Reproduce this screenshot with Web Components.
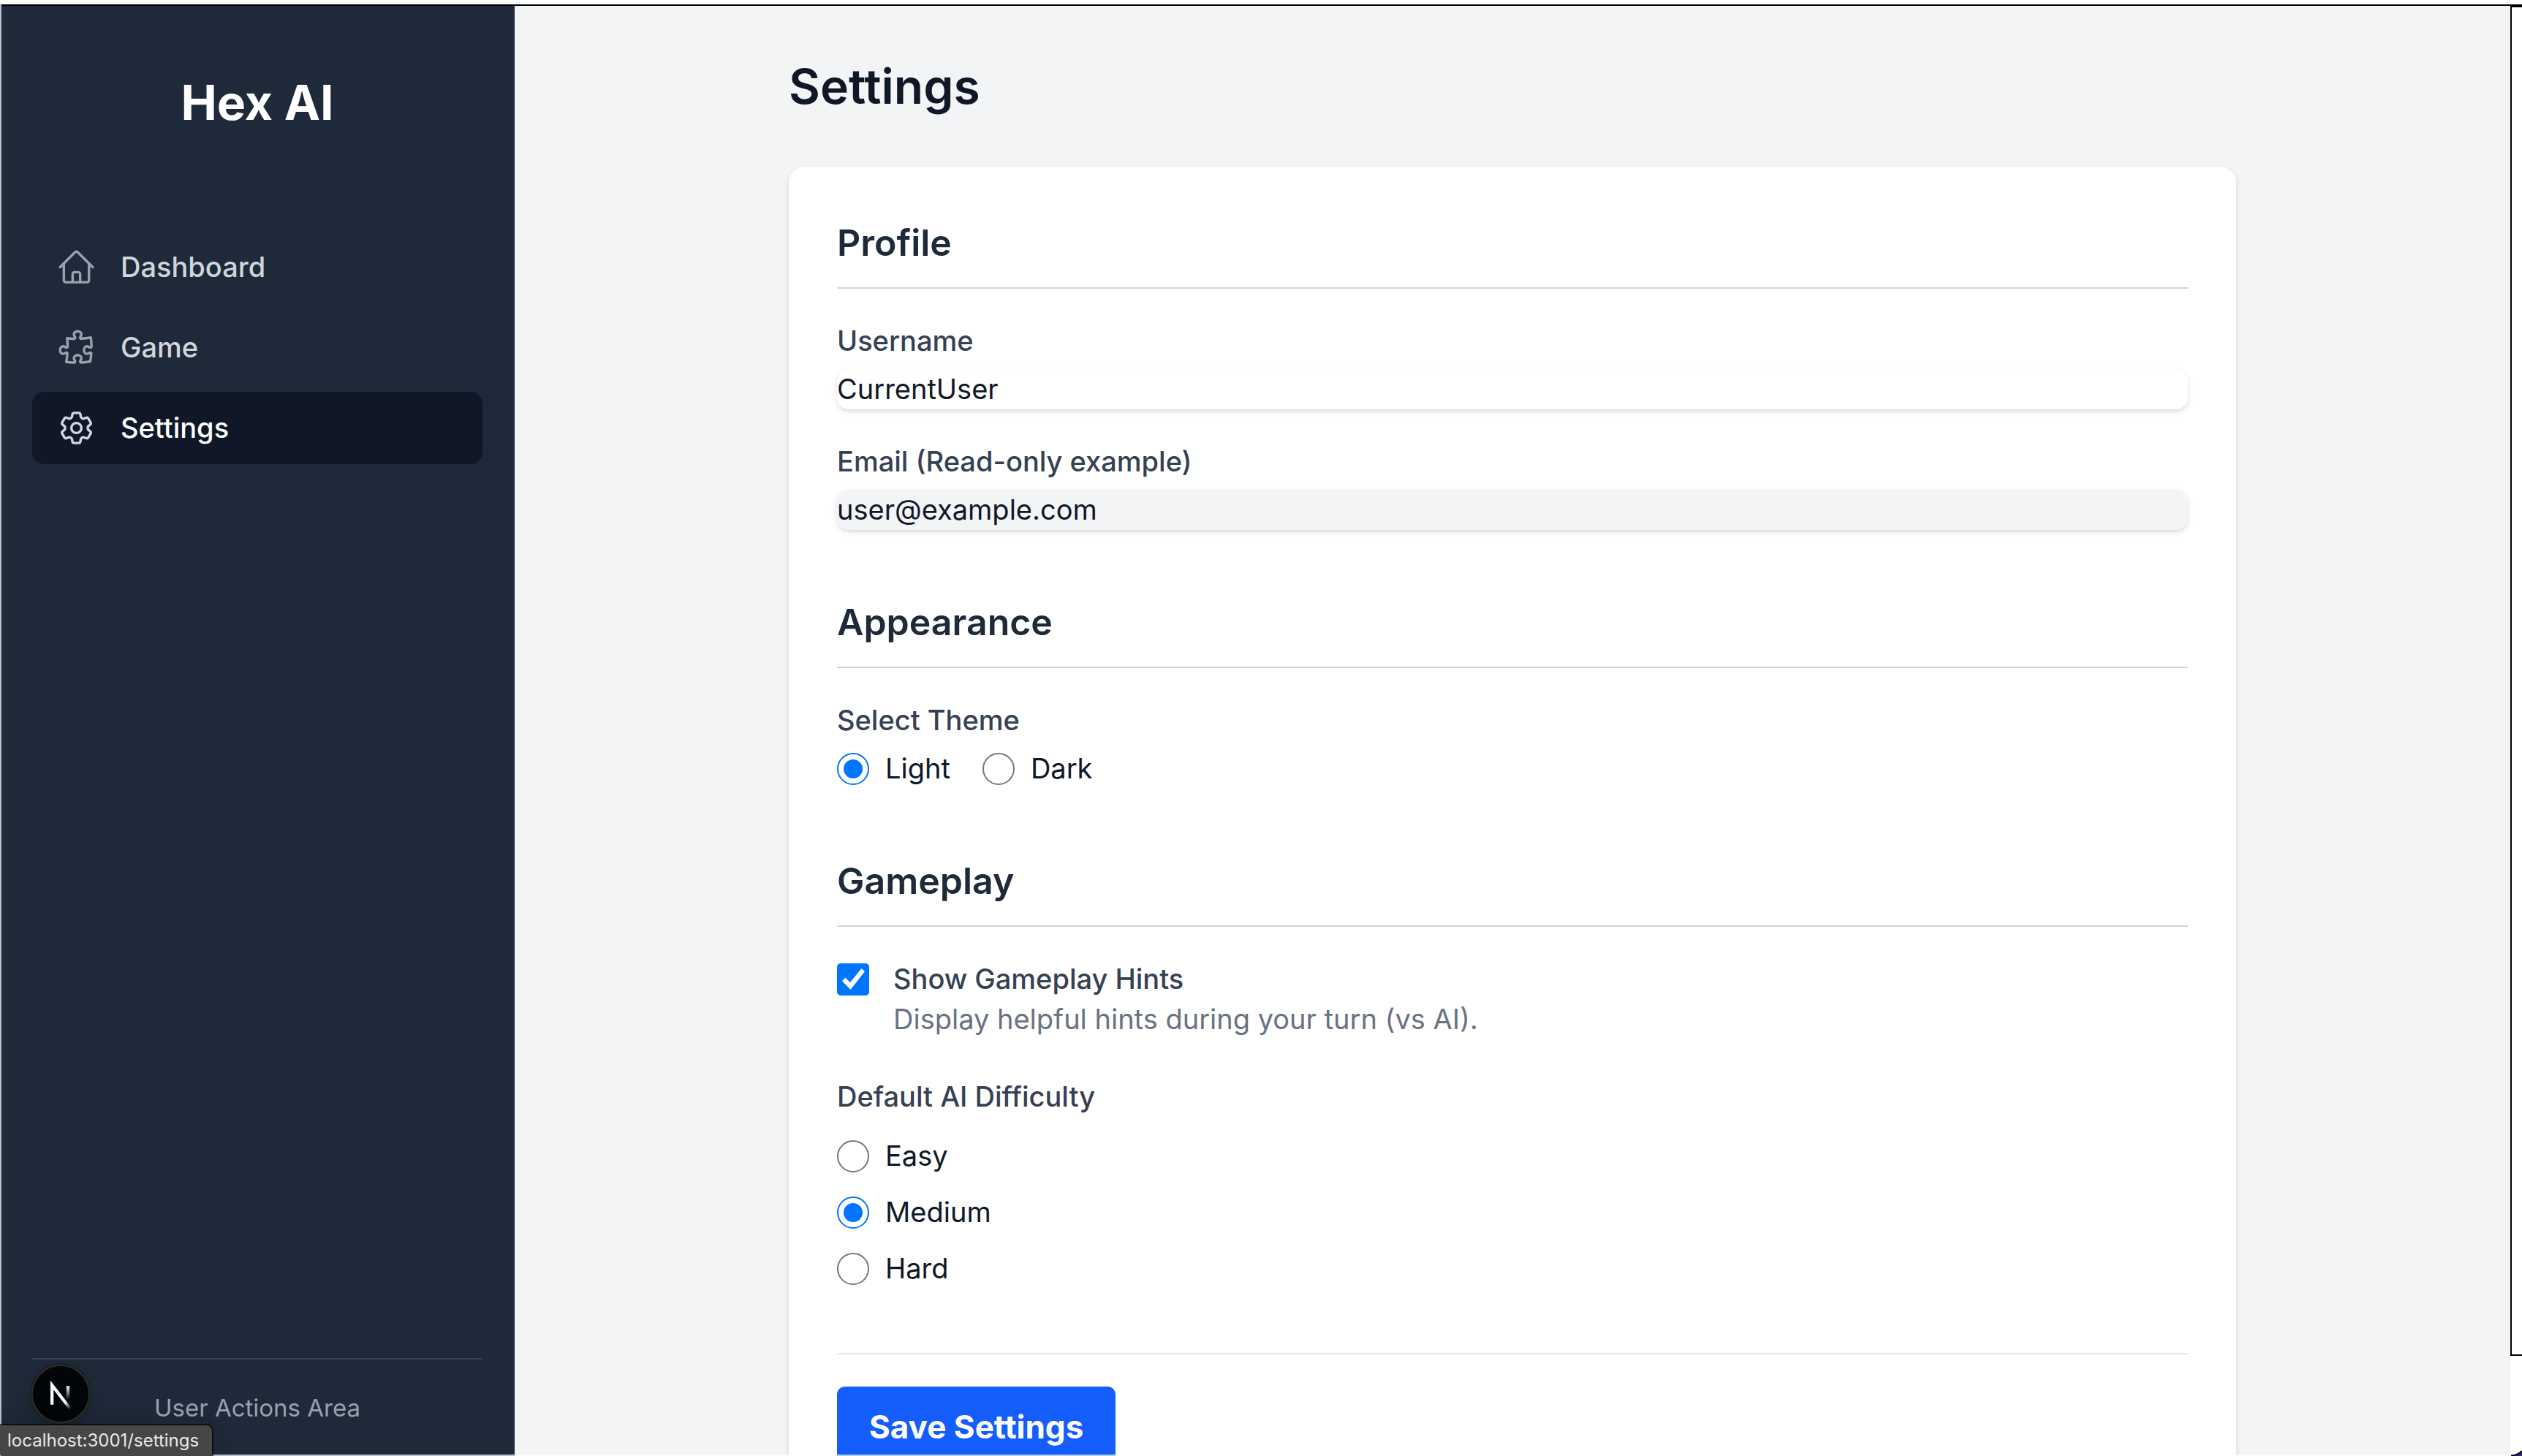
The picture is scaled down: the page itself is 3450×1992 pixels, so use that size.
<!DOCTYPE html>
<html lang="en">
<head>
<meta charset="utf-8">
<title>Hex AI - Settings</title>
<style>
  html, body { margin: 0; height: 100%; }
  body {
    font-family: Inter, "Liberation Sans", sans-serif;
    font-size: 38px; line-height: 55px; color: #101828; background: #fff;
    --gray-100: #f3f4f6; --gray-200: #e5e7eb; --gray-300: #d1d5dc; --gray-400: #99a1af;
    --gray-500: #6a7282; --gray-700: #364153; --gray-800: #1e2939; --gray-900: #101828;
    --accent: #0075ff;
  }
</style>
</head>
<body>
<app-window>
  <side-nav slot="nav" heading="Hex AI">
    <nav-item href="#dashboard" icon="home">Dashboard</nav-item>
    <nav-item href="#game" icon="puzzle">Game</nav-item>
    <nav-item href="#settings" icon="cog" active>Settings</nav-item>
    <span slot="footer">User Actions Area</span>
  </side-nav>
  <settings-page heading="Settings">
    <settings-section heading="Profile">
      <text-field label="Username" value="CurrentUser"></text-field>
      <text-field label="Email (Read-only example)" type="email" value="user@example.com" readonly></text-field>
    </settings-section>
    <settings-section heading="Appearance">
      <radio-group label="Select Theme" name="theme" options="Light,Dark" value="Light" inline></radio-group>
    </settings-section>
    <settings-section heading="Gameplay" spaced>
      <check-field label="Show Gameplay Hints" checked>Display helpful hints during your turn (vs AI).</check-field>
      <radio-group label="Default AI Difficulty" name="difficulty" options="Easy,Medium,Hard" value="Medium"></radio-group>
    </settings-section>
    <save-button slot="actions">Save Settings</save-button>
  </settings-page>
  <dev-badge slot="overlay"></dev-badge>
  <status-bubble slot="overlay">localhost:3001/settings</status-bubble>
</app-window>

<script>
const ICONS = {
  home: '<path d="M2.25 12l8.954-8.955c.44-.439 1.152-.439 1.591 0L21.75 12M4.5 9.75v10.125c0 .621.504 1.125 1.125 1.125H9.75v-4.875c0-.621.504-1.125 1.125-1.125h2.25c.621 0 1.125.504 1.125 1.125V21h4.125c.621 0 1.125-.504 1.125-1.125V9.75M8.25 21h8.25"/>',
  puzzle: '<path d="M14.25 6.087c0-.355.186-.676.401-.959.221-.29.349-.634.349-1.003 0-1.036-1.007-1.875-2.25-1.875s-2.25.84-2.25 1.875c0 .369.128.713.349 1.003.215.283.401.604.401.959v0a.64.64 0 01-.657.643 48.39 48.39 0 01-4.163-.3c.186 1.613.293 3.25.315 4.907a.656.656 0 01-.658.663v0c-.355 0-.676-.186-.959-.401a1.647 1.647 0 00-1.003-.349c-1.036 0-1.875 1.007-1.875 2.25s.84 2.25 1.875 2.25c.369 0 .713-.128 1.003-.349.283-.215.604-.401.959-.401v0c.31 0 .555.26.532.57a48.039 48.039 0 01-.642 5.056c1.518.19 3.058.309 4.616.354a.64.64 0 00.657-.643v0c0-.355-.186-.676-.401-.959a1.647 1.647 0 01-.349-1.003c0-1.035 1.008-1.875 2.25-1.875 1.243 0 2.25.84 2.25 1.875 0 .369-.128.713-.349 1.003-.215.283-.4.604-.4.959v0c0 .333.277.599.61.58a48.1 48.1 0 005.427-.63 48.05 48.05 0 00.582-4.717.532.532 0 00-.533-.57v0c-.355 0-.676.186-.959.401-.29.221-.634.349-1.003.349-1.035 0-1.875-1.007-1.875-2.25s.84-2.25 1.875-2.25c.37 0 .713.128 1.003.349.283.215.604.401.96.401v0a.656.656 0 00.658-.663 48.422 48.422 0 00-.37-5.36c-1.886.342-3.81.574-5.766.689a.578.578 0 01-.61-.58v0z"/>',
  cog: '<path d="M9.594 3.94c.09-.542.56-.94 1.11-.94h2.593c.55 0 1.02.398 1.11.94l.213 1.281c.063.374.313.686.645.87.074.04.147.083.22.127.324.196.72.257 1.075.124l1.217-.456a1.125 1.125 0 011.37.49l1.296 2.247a1.125 1.125 0 01-.26 1.431l-1.003.827c-.293.24-.438.613-.431.992a6.759 6.759 0 010 .255c-.007.378.138.75.43.99l1.005.828c.424.35.534.954.26 1.43l-1.298 2.247a1.125 1.125 0 01-1.369.491l-1.217-.456c-.355-.133-.75-.072-1.076.124a6.57 6.57 0 01-.22.128c-.331.183-.581.495-.644.869l-.213 1.28c-.09.543-.56.941-1.11.941h-2.594c-.55 0-1.02-.398-1.11-.94l-.213-1.281c-.062-.374-.312-.686-.644-.87a6.52 6.52 0 01-.22-.127c-.325-.196-.72-.257-1.076-.124l-1.217.456a1.125 1.125 0 01-1.369-.49l-1.297-2.247a1.125 1.125 0 01.26-1.431l1.004-.827c.292-.24.437-.613.43-.992a6.932 6.932 0 010-.255c.007-.378-.138-.75-.43-.99l-1.004-.828a1.125 1.125 0 01-.26-1.43l1.297-2.247a1.125 1.125 0 011.37-.491l1.216.456c.356.133.751.072 1.076-.124.072-.044.146-.087.22-.128.332-.183.582-.495.644-.869l.214-1.281z"/><path d="M15 12a3 3 0 11-6 0 3 3 0 016 0z"/>'
};

/* Base class: renders the subclass's css() and html() into an open shadow root. */
class Base extends HTMLElement {
  connectedCallback() {
    if (this.shadowRoot) return;
    this.attachShadow({ mode: 'open' }).innerHTML =
      `<style>*{box-sizing:border-box}:host{display:block}${this.css()}</style>${this.html()}`;
  }
  attr(name) { return this.getAttribute(name) || ''; }
}

customElements.define('app-window', class extends Base {
  css() { return `
    :host { position: relative; display: flex; flex-direction: column; height: 100vh; overflow: hidden; padding-top: 6px; box-sizing: border-box; }
    .frame { flex: 1; min-height: 0; display: flex; border-top: 2px solid #000; }
    main { flex: 1; min-width: 0; overflow: hidden; background: var(--gray-100); }
    .rail { width: 16px; display: flex; flex-direction: column; padding-bottom: 137px; }
    .rail div { flex: 1; border: 2px solid #000; border-right: 0; }
    .edge { position: absolute; inset: 6px 0 0 0; border: 0 solid rgba(255,255,255,.7); border-width: 0 0 2px 2px; pointer-events: none; }
    .corner { position: absolute; right: 0; bottom: 0; width: 16px; height: 8px; }
  `; }
  html() { return `
    <div class="frame"><slot name="nav"></slot><main><slot></slot></main><div class="rail"><div></div></div></div>
    <div class="edge"></div>
    <svg class="corner" viewBox="0 0 16 8" aria-hidden="true"><path d="M4 8Q11 7 16 1V8Z" fill="#2b2b73"/><path d="M1 7.500Q10 7 16 1" fill="none" stroke="#000" stroke-width="2"/></svg>
    <slot name="overlay"></slot>
  `; }
});

customElements.define('side-nav', class extends Base {
  css() { return `
    :host { display: flex; flex-direction: column; flex: none; width: 704px; box-sizing: border-box; padding: 88px 44px 44px; background: var(--gray-800); color: #fff; }
    .brand { text-align: center; font-size: 66px; line-height: 88px; font-weight: 700; margin-bottom: 132px; }
    nav { flex: 1; display: flex; flex-direction: column; gap: 11px; }
    footer { border-top: 2px solid var(--gray-700); padding-top: 44px; text-align: center; font-size: 33px; line-height: 44px; color: var(--gray-400); }
  `; }
  html() { return `<div class="brand">${this.attr('heading')}</div><nav><slot></slot></nav><footer><slot name="footer"></slot></footer>`; }
});

customElements.define('nav-item', class extends Base {
  css() { return `
    a { display: flex; align-items: center; gap: 33px; padding: 22px 33px; border-radius: 16px; color: var(--gray-300); font-weight: 500; text-decoration: none; }
    svg { width: 55px; height: 55px; flex: none; fill: none; stroke: var(--gray-400); stroke-width: 1.5; stroke-linecap: round; stroke-linejoin: round; }
    :host([active]) a { background: var(--gray-900); color: #fff; }
    :host([active]) svg { stroke: var(--gray-300); }
  `; }
  html() { return `<a href="${this.attr('href')}"><svg viewBox="0 0 24 24" aria-hidden="true">${ICONS[this.attr('icon')]}</svg><span><slot></slot></span></a>`; }
});

customElements.define('settings-page', class extends Base {
  css() { return `
    :host { max-width: 1980px; margin: 0 auto; padding: 66px 0; }
    h1 { margin: 0 0 66px; font-size: 66px; line-height: 88px; font-weight: 600; color: var(--gray-900); }
    form { display: flex; flex-direction: column; gap: 88px; padding: 66px; border-radius: 22px; background: #fff; box-shadow: 0 3px 8px rgba(0,0,0,.1), 0 3px 6px -3px rgba(0,0,0,.1); }
    .actions { border-top: 2px solid var(--gray-200); padding-top: 44px; }
  `; }
  html() { return `<h1>${this.attr('heading')}</h1><form><slot></slot><div class="actions"><slot name="actions"></slot></div></form>`; }
});

customElements.define('settings-section', class extends Base {
  css() { return `
    h2 { margin: 0 0 44px; padding-bottom: 22px; border-bottom: 2px solid var(--gray-300); font-size: 50px; line-height: 77px; font-weight: 600; color: var(--gray-800); }
    .fields { display: flex; flex-direction: column; gap: 44px; }
    :host([spaced]) .fields { gap: 51px; }
  `; }
  html() { return `<section><h2>${this.attr('heading')}</h2><div class="fields"><slot></slot></div></section>`; }
});

customElements.define('text-field', class extends Base {
  css() { return `
    :host { display: flex; flex-direction: column; gap: 11px; }
    label { color: var(--gray-700); font-weight: 500; }
    input { display: block; width: 100%; height: 55px; margin: 0; padding: 0; border: 0; border-radius: 16px; outline: 0; font: inherit; color: var(--gray-900); background: #fff; box-shadow: 0 3px 8px rgba(0,0,0,.1), 0 3px 6px -3px rgba(0,0,0,.1); }
    input:read-only { background: var(--gray-100); }
  `; }
  html() { return `<label for="field">${this.attr('label')}</label><input id="field" type="${this.attr('type') || 'text'}" value="${this.attr('value')}"${this.hasAttribute('readonly') ? ' readonly' : ''}>`; }
});

customElements.define('radio-group', class extends Base {
  css() { return `
    fieldset { margin: 0; padding: 0; border: 0; min-width: 0; }
    legend { padding: 0; margin-bottom: 26px; color: var(--gray-700); font-weight: 500; }
    .options { display: flex; flex-direction: column; align-items: flex-start; gap: 22px; }
    :host([inline]) legend { margin-bottom: 11px; }
    :host([inline]) .options { flex-direction: row; gap: 44px; }
    label { display: flex; align-items: center; gap: 22px; color: var(--gray-900); }
    input { appearance: none; width: 44px; height: 44px; margin: 0; border: 2px solid #767676; border-radius: 50%; display: grid; place-items: center; background: #fff; }
    input:checked { border-color: var(--accent); }
    input:checked::before { content: ""; width: 26px; height: 26px; border-radius: 50%; background: var(--accent); }
  `; }
  html() {
    const options = this.attr('options').split(',').map(o =>
      `<label><input type="radio" name="${this.attr('name')}" value="${o}"${o === this.attr('value') ? ' checked' : ''}><span>${o}</span></label>`).join('');
    return `<fieldset><legend>${this.attr('label')}</legend><div class="options">${options}</div></fieldset>`;
  }
});

customElements.define('check-field', class extends Base {
  css() { return `
    :host { display: flex; gap: 33px; }
    .box { display: grid; height: 55px; align-items: center; }
    .box > * { grid-area: 1 / 1; width: 44px; height: 44px; }
    input { appearance: none; margin: 0; border: 2px solid #767676; border-radius: 5px; background: #fff; }
    input:checked { border-color: var(--accent); background: var(--accent); }
    svg { pointer-events: none; fill: #fff; }
    input:not(:checked) + svg { visibility: hidden; }
    label { color: var(--gray-700); font-weight: 500; }
    p { margin: 0; color: var(--gray-500); }
  `; }
  html() { return `
    <span class="box"><input id="check" type="checkbox" aria-describedby="hint"${this.hasAttribute('checked') ? ' checked' : ''}><svg viewBox="0 0 44 44" aria-hidden="true"><path d="M7 24 11.500 19.500 18 26 33.500 7 38 11 18.500 36Z"/></svg></span>
    <div><label for="check">${this.attr('label')}</label><p id="hint"><slot></slot></p></div>
  `; }
});

customElements.define('save-button', class extends Base {
  css() { return `
    button { display: block; padding: 22px 44px; border: 0; border-radius: 11px; background: #155dfc; color: #fff; font: inherit; font-size: 44px; line-height: 66px; font-weight: 700; }
  `; }
  html() { return `<button type="button"><slot></slot></button>`; }
});

customElements.define('dev-badge', class extends Base {
  css() { return `
    :host { position: absolute; left: 42px; bottom: 44px; }
    button { display: block; width: 82px; height: 82px; padding: 0; border: 3px solid #2a2a2a; border-radius: 50%; background: #020609; box-shadow: 0 0 0 1px #171717, 0 16px 32px -8px rgba(0,0,0,.24); }
    svg { display: block; width: 76px; height: 76px; }
  `; }
  html() { return `
    <button type="button" aria-label="Open developer tools"><svg viewBox="1.500 1.500 33 33" fill="none" aria-hidden="true">
      <defs>
        <linearGradient id="a" gradientUnits="userSpaceOnUse" x1="9.956" y1="11.123" x2="15.478" y2="17.967"><stop stop-color="#fff"/><stop offset=".604" stop-color="#fff" stop-opacity="0"/><stop offset="1" stop-color="#fff" stop-opacity="0"/></linearGradient>
        <linearGradient id="b" gradientUnits="userSpaceOnUse" x1="11.822" y1="1.400" x2="11.791" y2="9.625"><stop stop-color="#fff"/><stop offset="1" stop-color="#fff" stop-opacity="0"/></linearGradient>
      </defs>
      <g transform="translate(10.500 11.800)" stroke-width="1.860"><path d="M13.300 15.200 2.340 1V12.600" stroke="url(#a)"/><path d="M11.825 1.500V13.100" stroke="url(#b)"/></g>
    </svg></button>
  `; }
});

customElements.define('status-bubble', class extends Base {
  css() { return `
    :host { position: absolute; left: 0; bottom: 0; box-sizing: border-box; height: 42px; padding: 0 18px 0 10px; border-radius: 0 8px 0 8px; background: #464646; color: #e8e8e8; font-size: 24px; line-height: 42px; box-shadow: 0 0 0 2px rgba(0,0,0,.6), 0 0 30px rgba(0,0,0,.15); }
  `; }
  html() { return `<slot></slot>`; }
});
</script>
</body>
</html>
